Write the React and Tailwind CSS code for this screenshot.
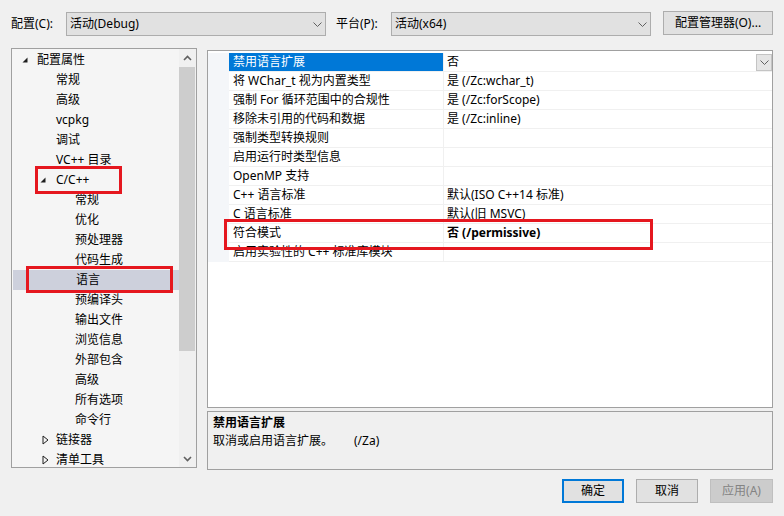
import React from "react";

const treeItems = [
  { label: "配置属性", level: 0, arrow: "open" },
  { label: "常规", level: 1 },
  { label: "高级", level: 1 },
  { label: "vcpkg", level: 1 },
  { label: "调试", level: 1 },
  { label: "VC++ 目录", level: 1 },
  { label: "C/C++", level: 1, arrow: "open" },
  { label: "常规", level: 2 },
  { label: "优化", level: 2 },
  { label: "预处理器", level: 2 },
  { label: "代码生成", level: 2 },
  { label: "语言", level: 2, selected: true },
  { label: "预编译头", level: 2 },
  { label: "输出文件", level: 2 },
  { label: "浏览信息", level: 2 },
  { label: "外部包含", level: 2 },
  { label: "高级", level: 2 },
  { label: "所有选项", level: 2 },
  { label: "命令行", level: 2 },
  { label: "链接器", level: 1, arrow: "closed" },
  { label: "清单工具", level: 1, arrow: "closed" },
];

const props = [
  { name: "禁用语言扩展", value: "否", selected: true },
  { name: "将 WChar_t 视为内置类型", value: "是 (/Zc:wchar_t)" },
  { name: "强制 For 循环范围中的合规性", value: "是 (/Zc:forScope)" },
  { name: "移除未引用的代码和数据", value: "是 (/Zc:inline)" },
  { name: "强制类型转换规则", value: "" },
  { name: "启用运行时类型信息", value: "" },
  { name: "OpenMP 支持", value: "" },
  { name: "C++ 语言标准", value: "默认(ISO C++14 标准)" },
  { name: "C 语言标准", value: "默认(旧 MSVC)" },
  { name: "符合模式", value: "否 (/permissive)", bold: true },
  { name: "启用实验性的 C++ 标准库模块", value: "" },
];

const ChevronDown = () => (
  <svg width="9" height="5" viewBox="0 0 9 5">
    <polyline points="0.5,0.5 4.5,4.5 8.5,0.5" fill="none" stroke="#606060" strokeWidth="1" />
  </svg>
);

const ScrollChevron = ({ up }) => (
  <svg width="9" height="6" viewBox="0 0 9 6">
    <polyline
      points={up ? "1,5 4.5,1.5 8,5" : "1,1 4.5,4.5 8,1"}
      fill="none"
      stroke="#606060"
      strokeWidth="1.6"
    />
  </svg>
);

const OpenArrow = () => (
  <svg width="6" height="6" viewBox="0 0 6 6">
    <path d="M5.5 0.5 L5.5 5.5 L0.5 5.5 Z" fill="#1e1e1e" />
  </svg>
);

const ClosedArrow = () => (
  <svg width="7" height="10" viewBox="0 0 7 10">
    <path d="M1 1 L6 5 L1 9 Z" fill="none" stroke="#1e1e1e" strokeWidth="1" />
  </svg>
);

const TreeRow = ({ item }) => {
  let lead;
  if (item.level === 0) {
    lead = (
      <div className="pl-[10px] w-[25px] flex items-center">
        <OpenArrow />
      </div>
    );
  } else if (item.level === 1 && item.arrow === "open") {
    lead = (
      <div className="pl-[28px] w-[44px] flex items-center">
        <OpenArrow />
      </div>
    );
  } else if (item.level === 1 && item.arrow === "closed") {
    lead = (
      <div className="pl-[30px] w-[44px] flex items-center">
        <ClosedArrow />
      </div>
    );
  } else if (item.level === 1) {
    lead = <div className="w-[44px]" />;
  } else {
    lead = <div className="w-[63px]" />;
  }
  return (
    <div
      className={
        "h-[20px] flex items-center leading-[20px] whitespace-nowrap " +
        (item.selected ? "bg-[#cdd0dc] ml-[1px]" : "")
      }
    >
      {lead}
      <span>{item.label}</span>
    </div>
  );
};

const App = () => {
  return (
    <div className="relative w-[784px] h-[516px] bg-[#f0f0f0] text-[12px] text-black font-['Noto_Sans','Noto_Sans_CJK_SC',sans-serif] overflow-hidden">
      {/* top bar */}
      <div className="flex items-start h-[48px] pt-[12px] pl-[11px]">
        <div className="w-[55px] leading-[24px]">配置(C):</div>
        <div className="w-[260px] h-[24px] bg-[#e1e1e1] border border-[#adadad] flex items-center justify-between pl-[3px] pr-[3px]">
          <span>活动(Debug)</span>
          <ChevronDown />
        </div>
        <div className="ml-[10px] w-[55px] leading-[24px]">平台(P):</div>
        <div className="w-[260px] h-[24px] bg-[#e1e1e1] border border-[#adadad] flex items-center justify-between pl-[3px] pr-[3px]">
          <span>活动(x64)</span>
          <ChevronDown />
        </div>
        <button className="ml-[12px] -mt-[1px] w-[110px] h-[24px] bg-[#e1e1e1] border border-[#adadad] flex items-center justify-center">
          配置管理器(O)...
        </button>
      </div>

      <div className="flex pl-[11px]">
        {/* tree */}
        <div className="w-[186px] h-[420px] border border-[#a0a0a0] bg-[#f5f5f5] flex">
          <div className="w-[167px] pt-[1px] overflow-hidden">
            {treeItems.map((item, i) => (
              <TreeRow key={i} item={item} />
            ))}
          </div>
          <div className="w-[17px] bg-[#f0f0f0] flex flex-col">
            <div className="h-[17px] flex items-center justify-center">
              <ScrollChevron up />
            </div>
            <div className="mt-[1px] h-[284px] bg-[#cdcdcd] mr-[1px]" />
            <div className="flex-1" />
            <div className="h-[17px] flex items-center justify-center">
              <ScrollChevron />
            </div>
          </div>
        </div>

        {/* right side */}
        <div className="ml-[10px] w-[566px] mt-[2px] flex flex-col">
          <div className="h-[358px] border border-[#a0a0a0] bg-white pt-[2px]">
            {props.map((p, i) => (
              <div key={i} className="flex h-[19px] leading-[18px] whitespace-nowrap">
                <div className="w-[21px] bg-[#f4f6f9]" />
                <div
                  className={
                    "w-[214px] pl-[4px] border-b border-[#f0f0f0] " +
                    (p.selected ? "bg-[#0078d7] text-white" : "")
                  }
                >
                  {p.name}
                </div>
                <div
                  className={
                    "flex-1 pl-[3px] border-l border-b border-[#f0f0f0] flex items-center justify-between " +
                    (p.bold ? "font-bold" : "")
                  }
                >
                  <span>{p.value}</span>
                  {p.selected && (
                    <div className="w-[16px] h-[17px] bg-[#e5e5e5] border border-[#c4c4c4] flex items-center justify-center">
                      <ChevronDown />
                    </div>
                  )}
                </div>
              </div>
            ))}
          </div>

          <div className="mt-[3px] h-[59px] border border-[#a0a0a0] bg-[#f0f0f0] pl-[5px] pt-[2px] leading-[18px]">
            <div className="font-bold">禁用语言扩展</div>
            <div>
              <span>取消或启用语言扩展。</span>
              <span className="ml-[21px]">(/Za)</span>
            </div>
          </div>

          <div className="mt-[9px] flex justify-end gap-[12px]">
            <button className="w-[62px] h-[24px] bg-[#e1e1e1] border-2 border-[#0078d7] flex items-center justify-center">
              确定
            </button>
            <button className="w-[62px] h-[24px] bg-[#e1e1e1] border border-[#adadad] flex items-center justify-center">
              取消
            </button>
            <button className="w-[63px] h-[24px] bg-[#cccccc] border border-[#bfbfbf] text-[#838383] flex items-center justify-center">
              应用(A)
            </button>
          </div>
        </div>
      </div>

      {/* red highlight boxes */}
      <div className="absolute left-[35px] top-[166px] w-[87px] h-[28px] border-[3px] border-[#e5171f]" />
      <div className="absolute left-[26px] top-[266px] w-[147px] h-[27px] border-[3px] border-[#e5171f]" />
      <div className="absolute left-[224px] top-[219px] w-[429px] h-[31px] border-[3px] border-[#e5171f]" />
    </div>
  );
};

export default App;
